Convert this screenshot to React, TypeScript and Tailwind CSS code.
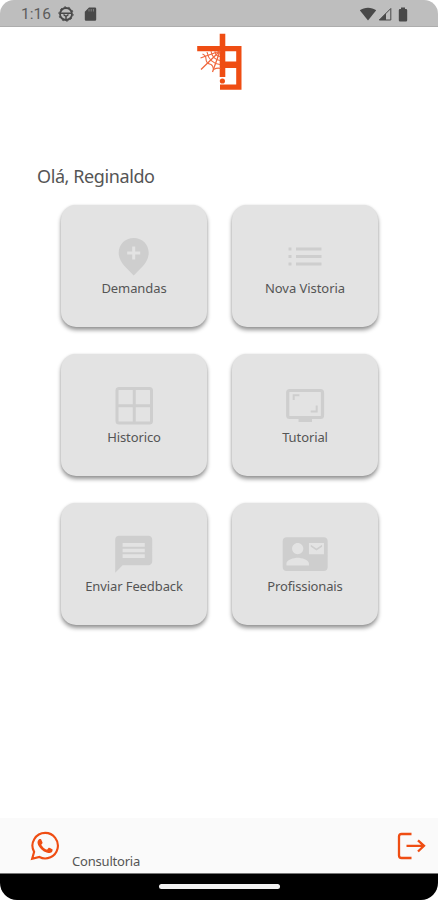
import type { ReactNode } from 'react';

type Tile = { label: string; spacing: string; icon: ReactNode };

const tiles: Tile[] = [
  {
    label: 'Demandas',
    spacing: 'tracking-[-0.1px]',
    icon: (
      <path
        fillRule="evenodd"
        d="M72.7 33C64 33 57.7 39.4 57.7 47.7C57.7 53 60 57 63.5 61L72.7 70.5L82 61C85.500 57 87.700 53 87.700 47.700C87.700 39.400 81.500 33 72.700 33ZM71.200 41.500h3v5h5v3h-5v5h-3v-5h-5v-3h5z"
      />
    ),
  },
  {
    label: 'Nova Vistoria',
    spacing: 'tracking-[-0.05px]',
    icon: (
      <path d="M56.500 42.500h3v3h-3zM56.500 50h3v3h-3zM56.500 57.500h3v3h-3zM64 42.500h25.500v3h-25.500zM64 50h25.500v3h-25.500zM64 57.500h25.500v3h-25.500z" />
    ),
  },
  {
    label: 'Historico',
    spacing: 'tracking-[-0.1px]',
    icon: (
      <g fill="none" stroke="currentColor" strokeWidth="3">
        <rect x="56" y="34.500" width="34.500" height="34.500" rx="2" />
        <path d="M73.250 34.500v34.500M56 51.750h34.500" />
      </g>
    ),
  },
  {
    label: 'Tutorial',
    spacing: 'tracking-[-0.1px]',
    icon: (
      <g>
        <rect x="55.700" y="36.500" width="34.800" height="27" rx="2" fill="none" stroke="currentColor" strokeWidth="3.200" />
        <path d="M66.500 64h13.500v4h-13.500z" />
        <path d="M61.700 46v-4.700h5.700M84.700 51.500v6h-6" fill="none" stroke="currentColor" strokeWidth="2" />
      </g>
    ),
  },
  {
    label: 'Enviar Feedback',
    spacing: 'tracking-[-0.1px]',
    icon: (
      <path
        transform="translate(50.500 29) scale(1.850)"
        d="M20 2H4c-1.100 0-1.990.9-1.990 2L2 22l4-4h14c1.100 0 2-.9 2-2V4c0-1.100-.9-2-2-2zm-2 12H6v-2h12v2zm0-3H6V9h12v2zm0-3H6V6h12v2z"
      />
    ),
  },
  {
    label: 'Profissionais',
    spacing: 'tracking-[-0.15px]',
    icon: (
      <path
        transform="translate(50.700 28.700) scale(1.875)"
        d="M21 8V7l-3 2-3-2v1l3 2 3-2zm1-5H2C.9 3 0 3.900 0 5v14c0 1.100.9 2 2 2h20c1.100 0 1.990-.9 1.990-2L24 5c0-1.100-.9-2-2-2zM8 6c1.660 0 3 1.340 3 3s-1.340 3-3 3-3-1.340-3-3 1.340-3 3-3zm6 12H2v-1c0-2 4-3.100 6-3.100s6 1.100 6 3.100v1zm8-6h-8V6h8v6z"
      />
    ),
  },
];

function StatusBar() {
  return (
    <header className="flex h-[27px] shrink-0 items-center border-b border-[#adadad] bg-[#bebebe] pt-[2px] pl-[21px] text-[#494949]">
      <span className="w-[30px] pt-[2px] text-[15.500px] leading-none whitespace-nowrap text-[#5c5c5c]" style={{ fontFamily: 'Roboto, sans-serif' }}>
        1:16
      </span>
      <svg className="ml-[7px]" width="16" height="16" viewBox="0 0 16 16" fill="none" stroke="currentColor">
        <circle cx="8" cy="8" r="6" strokeWidth="1.800" />
        <circle cx="8" cy="8" r="7.100" strokeWidth="1" strokeDasharray="2 2.460" />
        <path d="M2.500 7.300h11M5.500 8.500l2.500 2v3.500M10.500 8.500L8 10.500" strokeWidth="1.500" />
      </svg>
      <svg className="ml-[10px]" width="13" height="14" viewBox="0 0 13 14">
        <path fill="currentColor" d="M5 0.500h6a1.200 1.200 0 0 1 1.200 1.200V12.500a1.200 1.200 0 0 1-1.200 1.200H2a1.200 1.200 0 0 1-1.200-1.200V4.700z" />
        <path d="M5 2v2.500M7.200 2v2.500M9.400 2v2.500" stroke="#888" strokeWidth="0.900" />
      </svg>
      <svg className="ml-auto" width="18" height="14" viewBox="0 0 18 14">
        <path fill="currentColor" d="M9 13.500L0.800 3.300C5.500-.2 12.500-.2 17.200 3.300z" />
      </svg>
      <svg className="ml-[1px]" width="14" height="14" viewBox="0 0 14 14">
        <path d="M12.800 1.500V13H1.300z" fill="none" stroke="currentColor" strokeWidth="1" />
        <path d="M8 6.200V13H1.300z" fill="currentColor" />
      </svg>
      <svg className="mr-[30px] ml-[6px]" width="10" height="15" viewBox="0 0 10 15">
        <path fill="currentColor" d="M3 0.500h4v1.500h1a1.200 1.200 0 0 1 1.200 1.200v10a1.200 1.200 0 0 1-1.200 1.200H2A1.200 1.200 0 0 1 .8 13.200v-10A1.200 1.200 0 0 1 2 2h1z" />
      </svg>
    </header>
  );
}

function BrandMark() {
  return (
    <svg className="mt-[6px] ml-[196px] block shrink-0" width="48" height="59" viewBox="196 33 48 59" fill="none">
      <g fill="#ef4d13">
        <path d="M219.700 33.700h5.600V46h16.200v43.700h-21.500v-5.200h16.200V68h-10.900v9h-5.600V51.200h-22.500V46h22.500zM225.300 51.200v10.300h10.900V51.200z" fillRule="evenodd" />
        <circle cx="222.400" cy="81" r="2.600" />
      </g>
      <g stroke="#f0683e" strokeWidth="1.100">
        <path d="M220 51L201 69.500M220 51L212.500 72M220 51L200.500 58" strokeWidth="1.300" />
        <path d="M215 51q0 5 5 5.500M211 51q1 8 9 9.500M207 52q2 11 13 12.500M202.500 54q3.500 1.500 3.500 5q0 4.500 5 5.500q2 1 2.500 5q4-2 7-1" />
      </g>
    </svg>
  );
}

function MenuTile({ label, spacing, icon }: Tile) {
  return (
    <button className="flex h-[122px] w-[146px] flex-col items-center rounded-[15px] bg-[#e3e3e3] pt-[28px] shadow-[0_3px_4px_rgba(0,0,0,0.42),0_0_2px_rgba(0,0,0,0.1)]">
      <svg className="block text-[#cecece]" width="60" height="44" viewBox="43 28 60 44" fill="currentColor">
        {icon}
      </svg>
      <span className={`mt-[2px] text-[13px] leading-[18px] whitespace-nowrap text-[#555] ${spacing}`}>{label}</span>
    </button>
  );
}

function BottomBar() {
  return (
    <footer className="flex h-[56px] shrink-0 items-start border-b border-[#777] bg-[#fafafa]">
      <svg className="mt-[13px] ml-[30px]" width="30" height="30" viewBox="0 0 24 24" fill="#ef4d13">
        <path d="M17.472 14.382c-.297-.149-1.758-.867-2.030-.967-.273-.099-.471-.148-.670.150-.197.297-.767.966-.940 1.164-.173.199-.347.223-.644.075-.297-.150-1.255-.463-2.390-1.475-.883-.788-1.480-1.761-1.653-2.059-.173-.297-.018-.458.130-.606.134-.133.298-.347.446-.520.149-.174.198-.298.298-.497.099-.198.050-.371-.025-.520-.075-.149-.669-1.612-.916-2.207-.242-.579-.487-.500-.669-.510-.173-.008-.371-.010-.570-.010-.198 0-.520.074-.792.372-.272.297-1.040 1.016-1.040 2.479 0 1.462 1.065 2.875 1.213 3.074.149.198 2.096 3.200 5.077 4.487.709.306 1.262.489 1.694.625.712.227 1.360.195 1.871.118.571-.085 1.758-.719 2.006-1.413.248-.694.248-1.289.173-1.413-.074-.124-.272-.198-.570-.347" />
        <path d="M12.200 1.500A10.200 10.200 0 0 0 3.300 16.700L1.700 22.300L7.500 20.800A10.200 10.200 0 1 0 12.200 1.500z" fill="none" stroke="#ef4d13" strokeWidth="1.700" />
      </svg>
      <span className="mt-[34px] ml-[12px] text-[13px] leading-[18px] tracking-[-0.2px] whitespace-nowrap text-[#555]">Consultoria</span>
      <svg className="mt-[14px] mr-[12px] ml-auto" width="30" height="28" viewBox="0 0 30 28" fill="none" stroke="#ef4d13" strokeWidth="2.300">
        <path d="M15.500 2H5.500Q3 2 3 4.500V23.500Q3 26 5.500 26H15.500M10.500 13.800H28M22 8.300L28 13.800L22 19.500" />
      </svg>
    </footer>
  );
}

export default function App() {
  return (
    <div
      className="flex h-[900px] w-[438px] flex-col overflow-hidden rounded-t-[14px] rounded-b-[17px] bg-white"
      style={{ fontFamily: '"Noto Sans", sans-serif' }}
    >
      <StatusBar />
      <BrandMark />
      <main className="flex-1">
        <h1 className="mt-[72px] ml-[37px] text-[18px] leading-[25px] tracking-[-0.4px] text-[#555]">Olá, Reginaldo</h1>
        <div className="mt-[16px] ml-[61px] grid w-[317px] grid-cols-2 gap-x-[25px] gap-y-[27px]">
          {tiles.map((tile) => (
            <MenuTile key={tile.label} {...tile} />
          ))}
        </div>
      </main>
      <BottomBar />
      <div className="flex h-[26px] shrink-0 justify-center bg-black pt-[10px]">
        <div className="h-[5px] w-[121px] rounded-full bg-[#f2f2f2]" />
      </div>
    </div>
  );
}
